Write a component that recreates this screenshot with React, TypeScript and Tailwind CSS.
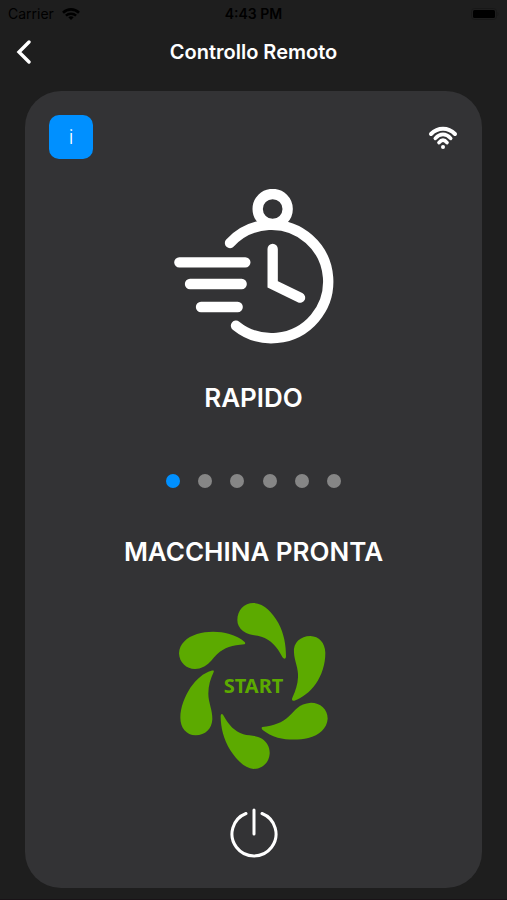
import { useState } from "react";

const PROGRAMS = ["RAPIDO", "ECO", "INTENSIVO", "DELICATO", "AMMOLLO", "VETRO"];

const PETALS = [
  "M217 90C217 60 238 39 265 39C298 40 322 68 340 99C357 130 363 166 363 198C363 208 357 208 352 201C337 171 317 149 289 140C272 134 252 137 234 123C223 114 217 104 217 90Z",
  "M387 188C384 158 407 138 436 138C462 139 480 158 481 188C481 224 470 255 452 282C434 307 412 323 388 332C381 334 379 329 383 321C392 302 398 283 399 262C401 235 388 213 387 188Z",
  "M292 411C326 408 352 398 372 379C389 363 400 341 438 338C466 338 488 357 488 386C486 415 463 435 430 444C400 451 366 450 338 443C321 438 305 430 293 420C289 416 289 412 292 411Z",
  "M175 376C191 405 209 425 235 433C252 438 273 435 291 446C306 456 315 472 314 491C312 518 292 537 266 537C238 535 214 508 196 481C176 449 167 411 167 380C167 371 171 370 175 376Z",
  "M146 246C137 265 130 286 130 311C130 338 143 360 142 388C141 416 121 436 92 436C64 435 46 413 46 383C46 352 59 320 76 293C94 267 115 249 139 242C145 241 148 242 146 246Z",
  "M238 163C203 166 177 173 157 192C139 208 129 235 90 237C64 237 43 218 42 190C43 162 65 142 96 132C128 123 164 124 193 132C211 137 227 145 238 155C242 158 241 162 238 163Z",
];

function StatusBar() {
  return (
    <div className="grid h-7 grid-cols-3 items-center px-2 text-sm text-black">
      <div className="flex items-center gap-2">
        <span>Carrier</span>
        <svg className="h-3 w-[18px]" viewBox="0 0 18 12" fill="none" stroke="currentColor">
          <path d="M1 4.7C5.6.3 12.4.3 17 4.7" strokeWidth="2.6" />
          <path d="M3.9 7.7C6.7 5 11.3 5 14.1 7.7" strokeWidth="2.4" />
          <path d="M6.3 9.2C7.8 7.9 10.2 7.9 11.7 9.2L9 12Z" fill="currentColor" stroke="none" />
        </svg>
      </div>
      <span className="text-center font-semibold">4:43 PM</span>
      <svg className="h-3 w-7 justify-self-end" viewBox="0 0 28 12">
        <rect x="0.5" y="0.5" width="25" height="11" rx="3" fill="none" stroke="#181818" />
        <rect x="2" y="2" width="22" height="8" rx="1.5" />
        <path d="M26.500 4v4c1.200-.5 1.200-3.500 0-4Z" fill="#181818" />
      </svg>
    </div>
  );
}

function QuickIcon() {
  return (
    <svg
      className="h-[155px] w-40"
      viewBox="39 27 480 465"
      fill="none"
      stroke="white"
      strokeWidth="31"
      strokeLinecap="round"
      aria-hidden="true"
    >
      <circle cx="335" cy="87" r="45" />
      <path d="M207 189A170 170 0 1 1 225 437" />
      <path d="M335 207V313L417 353" />
      <path d="M55 247H253M87 312H242M120 381H230" />
    </svg>
  );
}

function WifiIcon() {
  return (
    <svg className="h-6 w-[30px]" viewBox="0 0 90 72" fill="none" stroke="white" strokeWidth="12" strokeLinecap="round" role="img" aria-label="Wi-Fi">
      <path d="M9 27C30 6 60 6 81 27" />
      <path d="M22 40C36 24 54 24 68 40" strokeWidth="11" />
      <path d="M33 53C41 43 49 43 57 53" strokeWidth="11" />
      <circle cx="45" cy="66" r="6" fill="white" stroke="none" />
    </svg>
  );
}

export default function App() {
  const [selected, setSelected] = useState(0);
  return (
    <div className="flex min-h-screen flex-col border-b-2 border-[#191317] bg-[#1e1e1e] font-['Inter',sans-serif] text-white">
      <StatusBar />
      <header className="grid h-12 grid-cols-[40px_1fr_40px] items-center px-1">
        <button type="button" aria-label="Indietro" className="grid h-10 place-items-center">
          <svg className="h-6 w-4" viewBox="0 0 16 24" fill="none" stroke="white" strokeWidth="3.4" strokeLinecap="round" strokeLinejoin="miter">
            <path d="M13 2L3 12L13 22" />
          </svg>
        </button>
        <h1 className="text-center text-xl font-semibold">Controllo Remoto</h1>
      </header>
      <main className="mx-[25px] mt-[15px] mb-[11px] flex flex-1 flex-col items-center rounded-[36px] bg-[#333335] px-6 pt-6 pb-[30px]">
        <div className="flex w-full items-center justify-between">
          <button
            type="button"
            aria-label="Informazioni"
            className="h-11 w-11 rounded-[10px] bg-[#0090ff] text-xl font-light"
          >
            i
          </button>
          <WifiIcon />
        </div>
        <div className="mt-[30px]">
          <QuickIcon />
        </div>
        <h2 className="mt-[38px] text-[26px] leading-8 font-semibold">{PROGRAMS[selected]}</h2>
        <div className="mt-[60px] flex w-44 justify-between">
          {PROGRAMS.map((name, i) => (
            <button
              key={name}
              type="button"
              aria-label={name}
              onClick={() => setSelected(i)}
              className={`h-3.5 w-3.5 rounded-full ${i === selected ? "bg-[#0090ff]" : "bg-[#868686]"}`}
            />
          ))}
        </div>
        <p className="mt-12 text-[26px] leading-8 font-semibold">MACCHINA PRONTA</p>
        <button type="button" className="mt-[35px] grid place-items-center text-[#5caa00]">
          <svg className="col-start-1 row-start-1 h-[166px] w-[149px]" viewBox="42 39 447 498" fill="currentColor" aria-hidden="true">
            {PETALS.map((d) => (
              <path key={d} d={d} />
            ))}
          </svg>
          <span className="col-start-1 row-start-1 font-['Noto_Sans',sans-serif] text-xl font-bold">START</span>
        </button>
        <button type="button" aria-label="Spegni" className="mt-[39px]">
          <svg className="h-[50px] w-12" viewBox="0 0 48 50" fill="none" stroke="white" strokeWidth="3" strokeLinecap="round">
            <path d="M16 5.5A22 22 0 1 0 32 5.5M24 2V26" />
          </svg>
        </button>
      </main>
    </div>
  );
}
